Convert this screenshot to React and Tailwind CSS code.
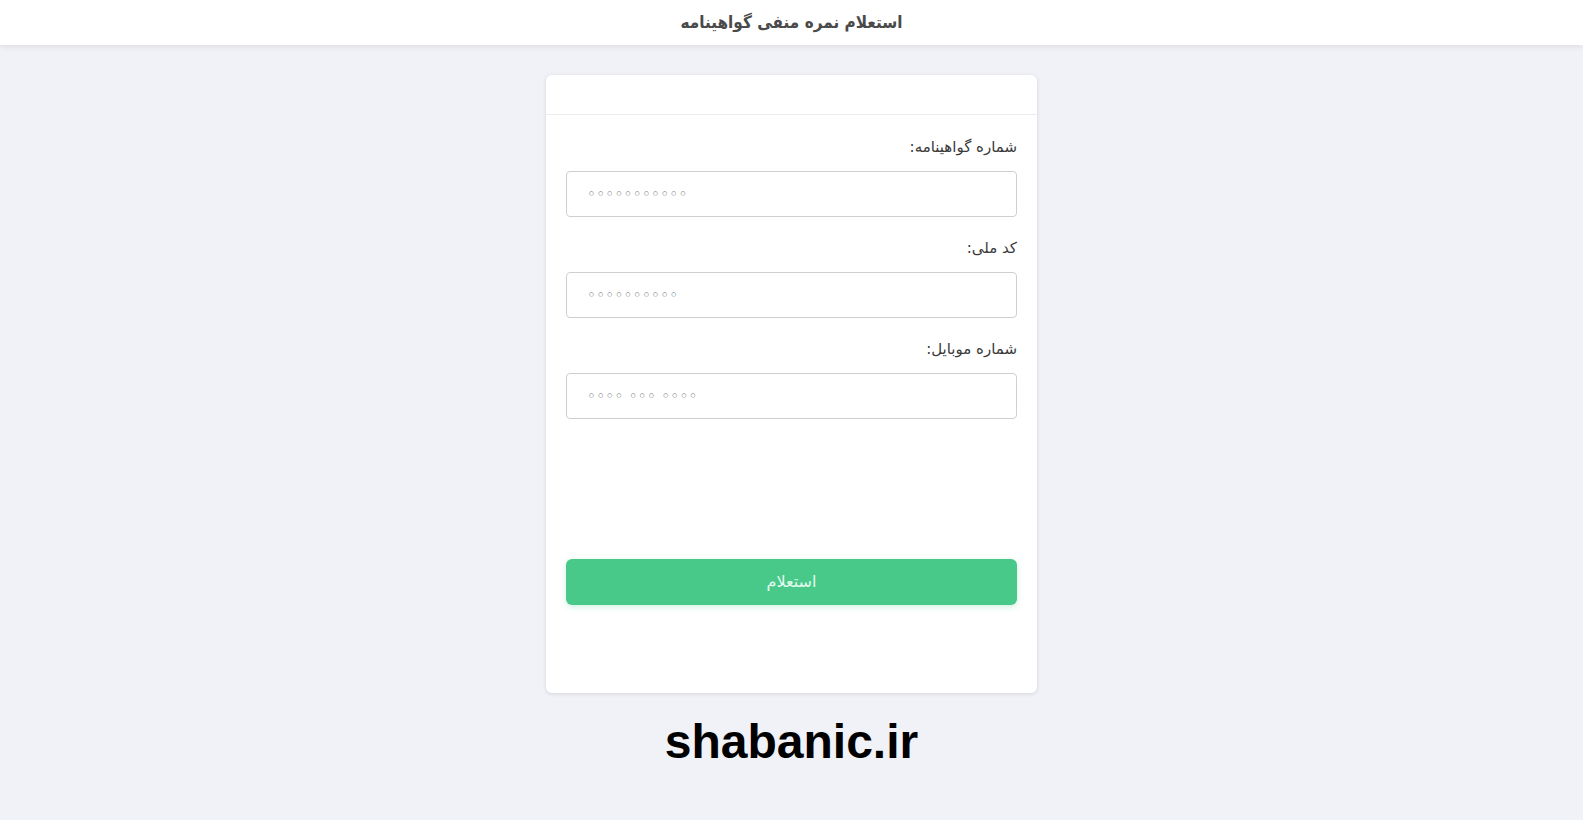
export default function App() {
  const fields = [
    { label: "شماره گواهینامه:", placeholder: "◦◦◦◦◦◦◦◦◦◦◦" },
    { label: "کد ملی:", placeholder: "◦◦◦◦◦◦◦◦◦◦" },
    { label: "شماره موبایل:", placeholder: "◦◦◦◦ ◦◦◦ ◦◦◦◦" },
  ];

  return (
    <div className="min-h-screen bg-[#f1f2f7] font-['DejaVu_Sans',sans-serif]">
      {/* Header */}
      <header className="h-[45px] bg-white shadow-[0_2px_6px_rgba(0,0,0,0.08)] flex items-center justify-center">
        <h1 dir="rtl" className="font-['DejaVu_Sans_Condensed','DejaVu_Sans',sans-serif] text-[17px] font-bold text-[#4a4a4a]">
          استعلام نمره منفی گواهینامه
        </h1>
      </header>

      {/* Card */}
      <div className="flex flex-col items-center pt-[30px]">
        <div className="w-[491px] bg-white rounded-md shadow-[0_1px_4px_rgba(0,0,0,0.12)]">
          <div className="h-[40px] border-b border-[#ececec]" />
          <form dir="rtl" className="px-5 pt-5 pb-[88px]">
            {fields.map((f, i) => (
              <div key={i} className={i > 0 ? "mt-[19px]" : ""}>
                <label className="block leading-6 text-[15px] text-[#3a3a3a]">{f.label}</label>
                <input
                  dir="ltr"
                  placeholder={f.placeholder}
                  className="mt-3 w-full h-[46px] rounded border border-[#cfcfcf] px-5 text-left text-[15px] tracking-[0.3px] placeholder:text-[#6f6f6f] outline-none"
                />
              </div>
            ))}
            <div className="h-[140px]" />
            <button
              type="button"
              className="w-full h-[46px] rounded-md bg-[#48c98a] text-[#e6fbef] text-[16px] shadow-[0_2px_6px_rgba(72,201,138,0.25)]"
            >
              استعلام
            </button>
          </form>
        </div>
        <div className="mt-[25px] font-['Liberation_Sans',Arial,sans-serif] font-bold text-[48px] leading-none text-black">
          shabanic.ir
        </div>
      </div>
    </div>
  );
}
